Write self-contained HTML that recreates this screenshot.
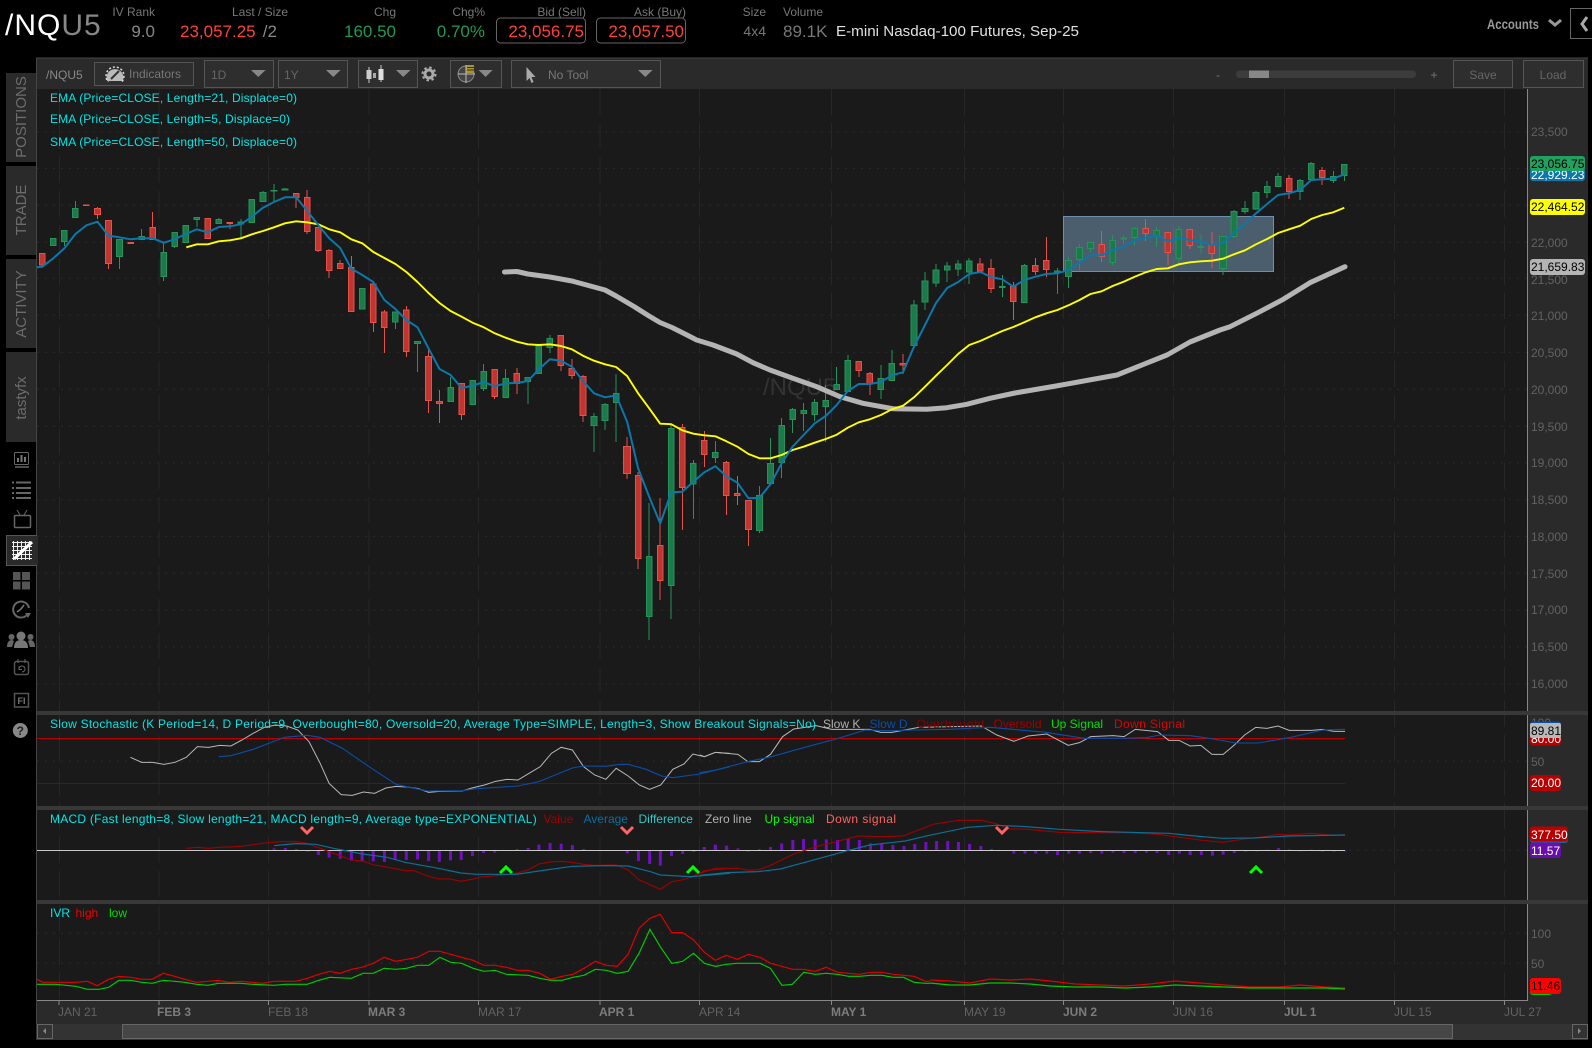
<!DOCTYPE html>
<html><head><meta charset="utf-8"><title>/NQU5</title>
<style>
html,body{margin:0;padding:0;background:#000;width:1592px;height:1048px;overflow:hidden}
svg{display:block}
text{font-family:"Liberation Sans",Arial,sans-serif;font-size:12px;white-space:pre}
.n *{vector-effect:non-scaling-stroke;fill:none}
.l{fill:none;stroke-linejoin:round}
.h{fill:#777}.o{fill:#777;font-size:12px}
.v{font-size:17px}
.a{fill:#626262}
.c{fill:#00e6e6}
.d{fill:#626262}.db{fill:#7c7c7c;font-weight:bold}
</style></head><body>
<svg width="1592" height="1048" viewBox="0 0 1592 1048" xmlns="http://www.w3.org/2000/svg">
<rect width="1592" height="1048" fill="#000"/>

<!-- header -->
<text x="5" y="35" font-size="30" style="font-size:30px;letter-spacing:1px" fill="#fff">/NQ<tspan fill="#888">U5</tspan></text>
<text x="155" y="16" text-anchor="end" class="h">IV Rank</text>
<text x="155" y="37" text-anchor="end" class="v" fill="#888">9.0</text>
<text x="288" y="16" text-anchor="end" class="h">Last / Size</text>
<text x="180" y="37" class="v" fill="#ff4136">23,057.25</text>
<text x="258" y="37" class="v" fill="#888"> /2</text>
<text x="396" y="16" text-anchor="end" class="h">Chg</text>
<text x="396" y="37" text-anchor="end" class="v" fill="#1f9a50">160.50</text>
<text x="485" y="16" text-anchor="end" class="h">Chg%</text>
<text x="485" y="37" text-anchor="end" class="v" fill="#1f9a50">0.70%</text>
<text x="586" y="16" text-anchor="end" class="h">Bid (Sell)</text>
<rect x="496.5" y="18" width="89" height="25" rx="4" fill="none" stroke="#666"/>
<text x="584" y="37" text-anchor="end" class="v" fill="#ff4136">23,056.75</text>
<text x="686" y="16" text-anchor="end" class="h">Ask (Buy)</text>
<rect x="596.5" y="18" width="89" height="25" rx="4" fill="none" stroke="#666"/>
<text x="684" y="37" text-anchor="end" class="v" fill="#ff4136">23,057.50</text>
<text x="766" y="16" text-anchor="end" class="h">Size</text>
<text x="766" y="36" text-anchor="end" style="font-size:14px" fill="#777">4x4</text>
<text x="783" y="16" class="h">Volume</text>
<text x="783" y="37" class="v" fill="#777">89.1K</text>
<text x="836" y="36" style="font-size:15px" fill="#e0e0e0" textLength="243" lengthAdjust="spacingAndGlyphs">E-mini Nasdaq-100 Futures, Sep-25</text>
<text x="1487" y="29" style="font-size:14px;font-weight:bold" fill="#999" textLength="52" lengthAdjust="spacingAndGlyphs">Accounts</text>
<path d="M1549 20l6 5 6-5" fill="none" stroke="#999" stroke-width="3"/>
<rect x="1570.5" y="8.5" width="24" height="30" fill="none" stroke="#666"/>
<path d="M1587 17l-5 7 5 7" fill="none" stroke="#aaa" stroke-width="3"/>

<!-- toolbar -->
<rect x="36" y="58" width="1552" height="31" fill="#2a2a2a"/>
<rect x="36" y="57.5" width="1552" height="1" fill="#444"/>
<text x="46" y="79" fill="#888">/NQU5</text>
<rect x="94.5" y="62.5" width="99" height="23" fill="#2e2e2e" stroke="#555"/>
<path d="M107.2 81a8.5 8.5 0 1 1 15.6 0z" fill="#bbb"/><circle cx="115" cy="76" r="9" fill="none" stroke="#ddd" stroke-width="1.5" stroke-dasharray="2 2" clip-path="inset(0 0 20% 0)"/><path d="M111 79l8-8" stroke="#333" stroke-width="2"/>
<text x="129" y="78" fill="#777">Indicators</text>
<rect x="204.5" y="60.5" width="69" height="27" fill="#2e2e2e" stroke="#555"/>
<text x="211" y="79" fill="#666">1D</text><path d="M251 70h14.6l-7.3 7z" fill="#888"/>
<rect x="278.5" y="60.5" width="69" height="27" fill="#2e2e2e" stroke="#555"/>
<text x="284" y="79" fill="#666">1Y</text><path d="M326 70h14.6l-7.3 7z" fill="#888"/>
<rect x="358.5" y="60.5" width="59" height="27" fill="#2e2e2e" stroke="#555"/>
<path d="M369 67v16M381 65v17" stroke="#ccc"/><rect x="366.5" y="70" width="5" height="9" fill="#ccc"/><rect x="378.5" y="69" width="5" height="11" fill="#ddd"/><rect x="373" y="73" width="3" height="5" fill="#aaa"/>
<path d="M396 70h14.6l-7.3 7z" fill="#888"/>
<circle cx="429" cy="74" r="4" fill="none" stroke="#aaa" stroke-width="3"/><circle cx="429" cy="74" r="6.5" fill="none" stroke="#aaa" stroke-width="2" stroke-dasharray="2.5 2.6"/>
<rect x="450.5" y="60.5" width="51" height="27" fill="#2e2e2e" stroke="#555"/>
<circle cx="466" cy="74" r="8" fill="#444" stroke="#888"/><path d="M458 74h17M466 65v18" stroke="#bbb"/><rect x="466.5" y="65" width="7.5" height="8" fill="#a8962c"/><path d="M467 67.500h7M467 70h7" stroke="#2e2e2e"/>
<path d="M478.6 70h14l-7 7z" fill="#888"/>
<rect x="511.5" y="60.5" width="149" height="27" fill="#2e2e2e" stroke="#555"/>
<path d="M526.5 67v14l3-3 2 5 2-1-2-5h4z" fill="#aaa"/>
<text x="548" y="79" fill="#777">No Tool</text><path d="M638 70h14.6l-7.3 7z" fill="#888"/>
<text x="1218" y="79" text-anchor="middle" fill="#777">-</text>
<rect x="1236" y="70.5" width="180" height="7.5" rx="3.5" fill="#3c3c3c"/>
<rect x="1249" y="70.5" width="20" height="7.5" fill="#888"/>
<text x="1434" y="79" text-anchor="middle" fill="#777">+</text>
<rect x="1453.5" y="60.5" width="59" height="27" fill="#2e2e2e" stroke="#555"/>
<text x="1483" y="79" text-anchor="middle" fill="#666">Save</text>
<rect x="1523.5" y="60.5" width="60" height="27" fill="#2e2e2e" stroke="#555"/>
<text x="1553" y="79" text-anchor="middle" fill="#666">Load</text>

<!-- chart backgrounds -->
<rect x="37" y="89" width="1491" height="911" fill="#1a1a1a"/>
<rect x="1528" y="89" width="60" height="935" fill="#2a2a2a"/>
<rect x="36" y="1000" width="1552" height="24" fill="#2a2a2a"/>
<rect x="36" y="58" width="1" height="982" fill="#444"/>

<!-- horizontal grid -->
<path d="M37 131.7H1528M37 168.5H1528M37 205.3H1528M37 242.3H1528M37 278.3H1528M37 315.3H1528M37 352.3H1528M37 389.3H1528M37 426H1528M37 462.8H1528M37 499.6H1528M37 536.4H1528M37 573.2H1528M37 610H1528M37 646.8H1528M37 683.6H1528M37 761.3H1528M37 850.3H1528M37 933.3H1528M37 963.3H1528" stroke="#2a2a2a" stroke-dasharray="2 6" fill="none"/>
<!-- vertical grid -->
<path d="M59.5 89V1000M159 89V1000M268.5 89V1000M369 89V1000M478.5 89V1000M600 89V1000M699.5 89V1000M831.5 89V1000M964.5 89V1000M1063.5 89V1000M1173.5 89V1000M1284.5 89V1000M1394.5 89V1000M1504.5 89V1000" stroke="#272727" stroke-dasharray="26 8" fill="none"/>

<!-- indicator separators -->
<rect x="37" y="711" width="1551" height="4" fill="#383838"/>
<rect x="37" y="806" width="1551" height="4" fill="#383838"/>
<rect x="37" y="900" width="1551" height="4" fill="#383838"/>
<path d="M1527.5 89V711M1527.5 715V806M1527.5 810V900M1527.5 904V1000" stroke="#888"/>
<path d="M37 1000.5H1528" stroke="#888"/>

<!-- watermark and highlight -->
<text x="763" y="395" style="font-size:24px" fill="#333">/NQU5</text>
<rect x="1063.5" y="216.5" width="210" height="55" fill="#8cbce0" fill-opacity=".42" stroke="#6e90ac"/>

<!-- candle wicks -->
<path shape-rendering="crispEdges" fill="none" stroke="#e8504a" d="M42.3 253V265M97.5 207V219M108.5 220V269M152.6 212V239M207.8 218V239M229.9 222V229M296.1 193V208M307.1 190V234M318.2 227V252M329.2 249V278M340.2 260V269M351.3 256V312M373.3 281V332M384.4 310V353M406.4 306V357M428.5 347V413M439.5 390V423M461.6 383V420M494.7 369V399M516.8 368V394M560.9 335V371M571.9 359V379M583 375V422M627.1 437V479M638.1 472V569M660.2 498V600M682.3 424V530M704.3 431V467M726.4 461V515M737.4 476V505M748.5 500V546M858.8 361V377M869.9 372V395M903 354V374M980.2 258V272M991.2 259V293M1013.3 282V320M1035.4 258V275M1046.4 237V277M1101.6 231V262M1145.7 219V241M1167.8 232V265M1189.8 229V249M1211.9 232V268M1289.1 175V199M1322.2 167V185"/>
<path shape-rendering="crispEdges" fill="none" stroke="#27935a" d="M64.4 230V246M75.4 201V218M119.5 239V269M141.6 229V239M163.7 243V281M174.7 232V248M196.8 217V227M218.8 218V223M240.9 219V238M263 191V202M274 184V202M285 188V190M395.4 312V329M417.5 341V372M450.6 377V402M483.7 364V391M505.7 369V398M527.8 377V404M549.9 335V353M594 413V452M605 403V430M616.1 374V442M649.2 503V640M671.2 425V619M693.3 460V519M715.4 441V463M759.5 486V533M770.5 438V484M781.6 418V478M792.6 408V433M803.6 403V431M814.7 399V421M825.7 385V442M836.7 367V390M847.8 355V392M880.9 365V399M891.9 350V381M914 300V346M925 272V310M936 264V287M947.1 262V282M958.1 260V276M969.2 258V284M1002.3 275V297M1024.3 264V303M1057.4 268V294M1068.5 257V288M1079.5 244V270M1090.5 242V252M1112.6 235V265M1123.6 235V244M1134.7 227V246M1156.7 227V247M1178.8 226V265M1200.9 235V253M1222.9 236V275M1234 210V238M1245 201V214M1256 191V210M1267.1 181V198M1278.1 173V187M1300.2 179V200M1311.2 162V180M1333.3 171V183M1344.3 164V181"/>

<!-- red bodies -->
<path shape-rendering="crispEdges" fill="#bf352f" stroke="#e8504a" d="M42.3 253.3m-2.8 0h5.6V265h-5.6zM86.4 205m-2.8 0h5.6V205.7h-5.6zM97.5 208.3m-2.8 0h5.6V214.7h-5.6zM108.5 220.3m-2.8 0h5.6V263.7h-5.6zM130.6 242.3m-2.8 0h5.6V243.7h-5.6zM152.6 227.3m-2.8 0h5.6V239.3h-5.6zM207.8 218.3m-2.8 0h5.6V238.7h-5.6zM229.9 222.3m-2.8 0h5.6V223.7h-5.6zM296.1 193.3m-2.8 0h5.6V197.7h-5.6zM307.1 197.3m-2.8 0h5.6V231.7h-5.6zM318.2 227.3m-2.8 0h5.6V250.7h-5.6zM329.2 250.3m-2.8 0h5.6V270.7h-5.6zM340.2 263.3m-2.8 0h5.6V268.7h-5.6zM351.3 267.3m-2.8 0h5.6V311.7h-5.6zM373.3 284m-2.8 0h5.6V322.3h-5.6zM384.4 312m-2.8 0h5.6V327.3h-5.6zM406.4 310m-2.8 0h5.6V351.7h-5.6zM428.5 356.3m-2.8 0h5.6V400.7h-5.6zM439.5 401.3m-2.8 0h5.6V403.7h-5.6zM461.6 383.7m-2.8 0h5.6V414.7h-5.6zM494.7 369.3m-2.8 0h5.6V396.7h-5.6zM516.8 373.3m-2.8 0h5.6V383.3h-5.6zM560.9 335.3m-2.8 0h5.6V365.3h-5.6zM571.9 368.3m-2.8 0h5.6V375.3h-5.6zM583 376.3m-2.8 0h5.6V415.7h-5.6zM627.1 446.3m-3.5 0h7V473.7h-7zM638.1 475.3m-2.8 0h5.6V558.7h-5.6zM660.2 545.3m-2.8 0h5.6V580.7h-5.6zM682.3 427.3m-2.8 0h5.6V487.7h-5.6zM704.3 440.3m-2.8 0h5.6V454.7h-5.6zM726.4 462.3m-2.8 0h5.6V495.3h-5.6zM737.4 493.3m-2.8 0h5.6V495.3h-5.6zM748.5 500.3m-2.8 0h5.6V529.7h-5.6zM858.8 361.3m-2.8 0h5.6V370.3h-5.6zM869.9 373.3m-2.8 0h5.6V384h-5.6zM903 363.3m-2.8 0h5.6V365h-5.6zM980.2 264m-2.8 0h5.6V271h-5.6zM991.2 268.3m-2.8 0h5.6V288.3h-5.6zM1013.3 286.3m-2.8 0h5.6V301.3h-5.6zM1035.4 265.7m-2.8 0h5.6V271.7h-5.6zM1046.4 260.3m-2.8 0h5.6V269.3h-5.6zM1101.6 244.3m-2.8 0h5.6V256.7h-5.6zM1145.7 228.3m-2.8 0h5.6V233.7h-5.6zM1167.8 232.3m-2.8 0h5.6V252.3h-5.6zM1189.8 229.3m-2.8 0h5.6V245.7h-5.6zM1211.9 245m-2.8 0h5.6V253.3h-5.6zM1289.1 178.3m-2.8 0h5.6V191.3h-5.6zM1322.2 170.3m-2.8 0h5.6V177.3h-5.6z"/>

<!-- green bodies -->
<path shape-rendering="crispEdges" fill="#1c7a4a" stroke="#27935a" d="M53.3 238.3m-2.8 0h5.6V245.7h-5.6zM64.4 230.3m-2.8 0h5.6V241.7h-5.6zM75.4 208.3m-2.8 0h5.6V217.7h-5.6zM119.5 239.3m-2.8 0h5.6V256.7h-5.6zM141.6 236.3m-2.8 0h5.6V239.3h-5.6zM163.7 252.3m-2.8 0h5.6V276.7h-5.6zM174.7 232.3m-2.8 0h5.6V246.7h-5.6zM185.7 225.3m-2.8 0h5.6V242.7h-5.6zM196.8 217.3m-2.8 0h5.6V219.7h-5.6zM218.8 219.3m-2.8 0h5.6V223.3h-5.6zM240.9 222m-2.8 0h5.6V224h-5.6zM251.9 199.3m-2.8 0h5.6V222.7h-5.6zM263 192.3m-2.8 0h5.6V201.7h-5.6zM274 190.3m-2.8 0h5.6V191h-5.6zM285 189m-2.8 0h5.6V190h-5.6zM362.3 288.3m-2.8 0h5.6V309h-5.6zM395.4 312m-2.8 0h5.6V322h-5.6zM417.5 341.3m-2.8 0h5.6V343.7h-5.6zM450.6 387.3m-2.8 0h5.6V401.7h-5.6zM472.6 380.3m-2.8 0h5.6V404.7h-5.6zM483.7 371.3m-2.8 0h5.6V388.7h-5.6zM505.7 378.3m-2.8 0h5.6V397.7h-5.6zM527.8 377.3m-2.8 0h5.6V381.7h-5.6zM538.8 346m-2.8 0h5.6V373.3h-5.6zM549.9 338.3m-2.8 0h5.6V347.7h-5.6zM594 416.3m-2.8 0h5.6V425.3h-5.6zM605 404.3m-2.8 0h5.6V420.7h-5.6zM616.1 393.3m-2.8 0h5.6V402.7h-5.6zM649.2 556.3m-2.8 0h5.6V616.3h-5.6zM671.2 428.3m-2.8 0h5.6V585.7h-5.6zM693.3 463.3m-2.8 0h5.6V484h-5.6zM715.4 452.3m-2.8 0h5.6V457.7h-5.6zM759.5 495.3m-2.8 0h5.6V530.7h-5.6zM770.5 463.3m-2.8 0h5.6V483.7h-5.6zM781.6 425.3m-2.8 0h5.6V462.7h-5.6zM792.6 409.3m-2.8 0h5.6V419.7h-5.6zM803.6 410.3m-2.8 0h5.6V413.3h-5.6zM814.7 402.3m-2.8 0h5.6V414.7h-5.6zM825.7 400.3m-2.8 0h5.6V406.7h-5.6zM836.7 384.3m-2.8 0h5.6V389.7h-5.6zM847.8 360.3m-2.8 0h5.6V391.7h-5.6zM880.9 378.3m-2.8 0h5.6V389.7h-5.6zM891.9 363.3m-2.8 0h5.6V380.7h-5.6zM914 305m-2.8 0h5.6V345.7h-5.6zM925 281m-2.8 0h5.6V302h-5.6zM936 270m-2.8 0h5.6V283h-5.6zM947.1 266m-2.8 0h5.6V270h-5.6zM958.1 264m-2.8 0h5.6V269h-5.6zM969.2 261m-2.8 0h5.6V272h-5.6zM1002.3 286.3m-2.8 0h5.6V287.7h-5.6zM1024.3 265.3m-2.8 0h5.6V302.7h-5.6zM1057.4 271m-2.8 0h5.6V272.3h-5.6zM1068.5 260.3m-2.8 0h5.6V276.7h-5.6zM1079.5 247.7m-2.8 0h5.6V259.3h-5.6zM1090.5 242.3m-2.8 0h5.6V248.7h-5.6zM1112.6 240.3m-2.8 0h5.6V262.7h-5.6zM1123.6 238m-2.8 0h5.6V239h-5.6zM1134.7 228.3m-2.8 0h5.6V237.7h-5.6zM1156.7 230.3m-2.8 0h5.6V236h-5.6zM1178.8 229.3m-2.8 0h5.6V258.3h-5.6zM1200.9 246.3m-2.8 0h5.6V247.3h-5.6zM1222.9 236.3m-3.5 0h7V268.7h-7zM1234 211.3m-2.8 0h5.6V236.7h-5.6zM1245 208.3m-2.8 0h5.6V211.7h-5.6zM1256 192.3m-2.8 0h5.6V209h-5.6zM1267.1 186.3m-2.8 0h5.6V192.7h-5.6zM1278.1 176.3m-2.8 0h5.6V186.7h-5.6zM1300.2 180.3m-2.8 0h5.6V191.3h-5.6zM1311.2 163.3m-2.8 0h5.6V179.3h-5.6zM1333.3 176.3m-2.8 0h5.6V180.7h-5.6zM1344.3 164.3m-2.8 0h5.6V175.3h-5.6z"/>

<!-- SMA 50 -->
<polyline class="l" stroke="#b4b4b4" stroke-width="5" stroke-linecap="round" points="504.5,272 516.8,271.5 527.8,274 538.8,275.5 549.9,277 560.9,279 571.9,281 583,284 594,287 605,290 616.1,296 634,306.5 649,316 660,322.500 672,327.500 685,334 696.7,340 713,345 736.7,354 753,362.7 770,370 793,378.3 816.7,386.7 840,396.7 863,403.3 893,408.7 926.7,409.3 946.7,407.7 966.7,404.3 990,398.3 1015,393 1056,386 1117,375 1167,355 1190,342 1220,330 1230,326.7 1256.7,313.3 1283.3,299.3 1310,282.7 1345,266.7"/>
<!-- EMA 21 -->
<polyline class="l" stroke="#ffff00" stroke-width="1.9" points="186.3,247.3 196.8,244.3 207.8,244.3 218.8,241.3 229.9,240.3 240.9,238.3 251.9,234.3 263,231 274,227.3 285,223.3 296.1,221.3 307.1,222.3 318.2,224.3 329.2,229.3 340.2,232.3 351.3,239.3 362.3,243.3 373.3,252 384.4,258 395.4,264 406.4,272 417.5,282 428.5,293 439.5,303 450.6,311 461.6,316.7 472.6,322.7 483.7,327.3 494.7,333.3 505.7,337.7 516.8,341.7 527.8,344.3 538.8,345 549.9,344.3 560.9,346 571.9,349.3 583,355.7 594,360.7 605,364.3 616.1,367 627.1,376 638.1,393.3 649.2,408.3 660.2,423.7 671.2,424.2 682.3,430.3 693.3,433.7 704.3,435.3 715.4,436.3 726.4,441.3 737.4,446.7 748.5,454 759.5,458.3 770.5,458.3 781.6,455 792.6,450 803.6,446.7 814.7,442.7 825.7,439 836.7,434.7 847.8,427.7 858.8,422.3 869.9,419.3 880.9,415 891.9,409.3 903,405.7 914,397.3 925,386.7 936,375.7 947.1,365 958.1,354 969.2,345 980.2,341 991.2,336 1002.3,331 1013.3,327 1024.3,322.3 1035.4,317.3 1046.4,313.3 1057.4,310 1068.5,305.3 1079.5,300 1090.5,294 1101.6,291.3 1112.6,286 1123.6,281.7 1134.7,276.7 1145.7,272.3 1156.7,269 1167.8,268.3 1178.8,264.3 1189.8,262.3 1200.9,261.3 1211.9,260.7 1222.9,258.7 1234,254.3 1245,250.3 1256,244.3 1267.1,239 1278.1,233 1289.1,229.3 1300.2,225.7 1311.2,219 1322.2,215 1333.3,212.3 1344.3,207.7"/>
<!-- EMA 5 -->
<polyline class="l" stroke="#0a78aa" stroke-width="2" points="36.7,267.3 42.3,266.7 53.3,258.3 64.4,248.3 75.4,234 86.4,225.3 97.5,221.7 108.5,235.7 119.5,237.3 130.6,239.3 141.6,238.3 152.6,238.3 163.7,242.7 174.7,239.3 185.7,234 196.8,229.3 207.8,232.3 218.8,227 229.9,226.3 240.9,224.3 251.9,216.7 263,207.7 274,202 285,197.3 296.1,197.3 307.1,210.7 318.2,225 329.2,238.3 340.2,248 351.3,268.7 362.3,275 373.3,282 384.4,300 395.4,309 406.4,320 417.5,327.3 428.5,348.3 439.5,369 450.6,375 461.6,388 472.6,385.7 483.7,382 494.7,386.3 505.7,383.3 516.8,383 527.8,381 538.8,369.3 549.9,359.3 560.9,360.7 571.9,366.7 583,381 594,393.3 605,397.3 616.1,395.3 627.1,421.7 638.1,468.3 649.2,496.7 660.2,523.5 671.2,492.3 682.3,491.7 693.3,481.7 704.3,472.3 715.4,466.3 726.4,476.3 737.4,482.7 748.5,498.3 759.5,497.7 770.5,484.3 781.6,463.3 792.6,446.7 803.6,435 814.7,423.3 825.7,416 836.7,405 847.8,391 858.8,384 869.9,384 880.9,382 891.9,375.3 903,372.3 914,346.7 925,325 936,303 947.1,288 958.1,282 969.2,274 980.2,272 991.2,277 1002.3,279.3 1013.3,286.7 1024.3,280 1035.4,276.7 1046.4,274 1057.4,273.3 1068.5,270 1079.5,262.7 1090.5,255.3 1101.6,255.3 1112.6,250 1123.6,246.7 1134.7,240 1145.7,238 1156.7,235.3 1167.8,241.3 1178.8,237.7 1189.8,240 1200.9,241.7 1211.9,245.3 1222.9,242.7 1234,232.7 1245,224 1256,213.3 1267.1,204 1278.1,195 1289.1,193.3 1300.2,190 1311.2,180 1322.2,179.3 1333.3,178.7 1344.3,174.3"/>

<text x="50" y="102" class="c" textLength="247">EMA (Price=CLOSE, Length=21, Displace=0)</text>
<text x="50" y="123" class="c" textLength="240">EMA (Price=CLOSE, Length=5, Displace=0)</text>
<text x="50" y="146" class="c" textLength="247">SMA (Price=CLOSE, Length=50, Displace=0)</text>

<!-- Stochastic -->
<path d="M37 738.5H1345" stroke="#b80000" fill="none"/>
<path d="M37 783.5H1345" stroke="#8a0000" fill="none"/>
<g class="n" transform="translate(30,700) scale(.4464,.3333)">
<polyline stroke="#b8b8b8" stroke-width="1" points="225,172 250,187 275,187 300,193 325,187 350,172 375,140 400,142 425,136 450,138 475,120 500,100 525,82 550,75 575,78 600,90 625,125 650,190 670,250 697,284 722,286 747,276 772,280 797,264 820,259 845,261 870,266 893,277 918,274 968,273 990,264 1018,255 1043,244 1068,238 1093,240 1118,220 1143,200 1168,160 1190,142 1215,150 1240,200 1265,225 1290,238 1313,205 1340,228 1365,255 1388,268 1413,255 1440,208 1465,192 1485,162 1510,170 1535,157 1568,160"/>
<polyline stroke="#0a4ea8" stroke-width="1.1" points="423,170 450,167 500,148 545,125 570,112 620,106 650,112 700,145 765,205 820,253 850,262 890,273 968,272 1000,266 1093,258 1140,245 1215,204 1240,198 1290,199 1320,193 1340,193 1380,208 1415,228 1440,233 1500,222 1568,200"/>
</g>
<g class="n" transform="translate(700,700) scale(.4464,.3333)">
<polyline stroke="#b8b8b8" stroke-width="1" points="0,165 10,170 35,157 85,163 107,185 133,185 158,163 185,110 210,87 235,82 260,77 295,88 380,88 405,97 430,97 490,82 630,78 665,105 703,124 735,108 777,102 825,136 850,128 875,110 925,107 950,110 975,88 1025,95 1050,121 1073,121 1098,138 1122,136 1147,163 1172,163 1197,135 1220,105 1245,82 1270,85 1295,78 1320,91 1370,91 1395,88 1420,94 1445,94"/>
<polyline stroke="#0a4ea8" stroke-width="1.1" points="0,218 35,210 110,184 160,170 240,140 305,117 370,90 430,92 480,90 560,88 650,82 700,88 775,97 860,115 950,115 1000,113 1030,105 1100,107 1150,117 1200,129 1250,129 1320,113 1395,90 1445,88"/>
</g>
<text x="50" y="728" class="c" textLength="766">Slow Stochastic (K Period=14, D Period=9, Overbought=80, Oversold=20, Average Type=SIMPLE, Length=3, Show Breakout Signals=No)</text>
<text x="823" y="728" fill="#b0b0b0">Slow K</text>
<text x="869.5" y="728" fill="#0a4ea8">Slow D</text>
<text x="916.5" y="728" fill="#8a0000" textLength="68">Overbought</text>
<text x="993.5" y="728" fill="#a00000">Oversold</text>
<text x="1051" y="728" fill="#00e000">Up Signal</text>
<text x="1114" y="728" fill="#e00000" textLength="71">Down Signal</text>

<!-- MACD -->
<g class="n" transform="translate(30,700) scale(.4464,.3333)">
<path stroke="#7010c0" stroke-width="3" d="M547 445V451M572 444V451M597 447V451M622 451V455M646 451V465M670 451V473M695 451V476M720 451V482M744 451V485M769 451V484M794 451V486M818 451V480M843 451V480M868 451V478M893 451V483M917 451V486M942 451V481M966 451V480M991 451V468M1016 451V459M1041 451V458M1066 450V452M1091 447V451M1116 444V451M1140 434V451M1165 429V451M1190 431V451M1215 435V451M1240 447V451M1265 450V452M1290 451V452M1313 450V452M1338 451V460M1363 451V483M1388 451V492M1412 451V497M1437 451V468M1462 451V462M1487 451V456M1510 441V451M1535 434V451M1560 437V451"/>
</g>
<g class="n" transform="translate(700,700) scale(.4464,.3333)">
<path stroke="#7010c0" stroke-width="3" d="M10 441V451M35 435V451M60 441V451M85 445V451M108 451V455M133 447V451M158 441V451M183 430V451M208 420V451M232 417V451M258 418V451M283 418V451M308 420V451M332 417V451M357 420V451M382 430V451M407 431V451M432 435V451M457 438V451M481 432V451M506 426V451M530 423V451M555 423V451M579 426V451M604 432V451M629 438V451M653 447V451M678 451V453M703 451V461M728 451V461M752 451V461M777 451V461M801 451V465M826 451V461M850 451V461M875 451V459M900 451V461M925 451V458M950 451V459M975 451V459M1000 451V458M1024 451V459M1050 451V465M1074 451V461M1098 451V465M1123 451V465M1148 451V467M1172 451V464M1197 451V459M1222 451V455M1247 451V454M1270 449V451M1296 444V451M1320 448V451M1345 451V454M1370 449V451M1395 451V455M1420 451V455M1445 451V454"/>
</g>
<path d="M37 850.5H1345" stroke="#c8c8c8" fill="none"/>
<g class="n" transform="translate(30,700) scale(.4464,.3333)">
<polyline stroke="#a00000" stroke-width="1.1" points="350,445 375,442 400,445 425,442 450,441 480,438 520,430 560,425 595,425 620,430 650,445 680,460 720,480 745,483 770,495 795,500 840,512 860,512 890,528 915,537 940,537 965,544 990,538 1015,530 1040,528 1090,520 1115,510 1140,492 1165,486 1190,484 1215,487 1240,493 1265,496 1313,495 1340,510 1365,540 1412,568 1438,545 1460,540 1485,530 1510,512 1568,505"/>
<polyline stroke="#0a7096" stroke-width="1.2" points="547,437 595,431 640,433 680,445 745,462 800,472 840,487 915,505 965,519 1000,523 1090,523 1140,513 1215,499 1290,497 1340,498 1390,515 1412,525 1480,530 1568,520"/>
</g>
<g class="n" transform="translate(700,700) scale(.4464,.3333)">
<polyline stroke="#a00000" stroke-width="1.1" points="0,520 35,505 85,505 110,511 135,508 160,495 210,462 260,440 305,425 355,408 405,410 455,408 480,395 525,372 580,361 630,361 660,370 695,387 725,387 805,397 900,398 960,398 1025,403 1065,410 1120,420 1170,427 1220,417 1270,409 1295,403 1320,405 1370,400 1420,406 1445,404"/>
<polyline stroke="#0a7096" stroke-width="1.2" points="0,526 60,518 130,515 180,507 260,478 330,452 380,435 460,423 510,407 600,382 665,376 730,380 805,388 900,395 1050,400 1100,407 1170,415 1240,414 1320,408 1445,405"/>
</g>
<path d="M301 827l6 6 6-6M621 827l6 6 6-6M996 827l6 6 6-6" fill="none" stroke="#ff6464" stroke-width="3"/>
<path d="M500 873l6-6 6 6M687 873l6-6 6 6M1250 873l6-6 6 6" fill="none" stroke="#00ff00" stroke-width="3"/>
<text x="50" y="823" class="c" textLength="486.700">MACD (Fast length=8, Slow length=21, MACD length=9, Average type=EXPONENTIAL)</text>
<text x="543.5" y="823" fill="#a00000">Value</text>
<text x="583.5" y="823" fill="#0a6ea0">Average</text>
<text x="638.5" y="823" fill="#33c8c8">Difference</text>
<text x="705" y="823" fill="#b0b0b0">Zero line</text>
<text x="764.5" y="823" fill="#00ff00">Up signal</text>
<text x="826" y="823" fill="#ff6464" textLength="70">Down signal</text>

<!-- IVR -->
<g class="n" transform="translate(30,890) scale(.574,.3333)">
<polyline stroke="#e00000" stroke-width="1.2" points="12,268 22,277 80,277 100,274 117,287 137,268 155,259 175,262 195,268 213,268 232,250 252,259 270,268 290,277 310,274 328,271 347,277 367,274 387,277 405,280 425,274 463,274 483,265 503,253 522,244 540,250 560,238 578,232 598,220 617,202 637,214 656,208 675,202 695,184 714,184 733,193 752,202 772,211 791,226 810,226 830,232 849,241 868,241 888,250 907,268 927,259 946,253 965,235 985,214 1004,226 1023,229 1042,193 1061,115 1080,85 1098,73 1118,128 1137,128 1156,150 1175,187 1194,211 1213,196 1232,208 1252,193 1272,202 1290,220 1310,229 1328,238 1348,238 1368,244 1387,232 1407,247 1426,250 1445,253 1465,247 1484,247 1504,253 1522,256 1540,259 1560,274 1568,274"/>
<polyline stroke="#00c800" stroke-width="1.2" points="12,283 45,283 80,289 100,298 120,298 137,292 155,271 175,271 195,277 213,280 232,271 252,274 270,277 290,283 310,286 328,280 367,280 387,283 425,286 445,283 483,283 503,271 522,262 560,265 580,250 598,250 617,235 637,238 656,235 675,226 695,226 714,202 733,217 752,220 772,235 791,244 810,241 830,253 868,256 888,265 907,271 927,271 946,262 965,256 985,238 1004,241 1023,250 1042,244 1061,190 1080,118 1098,170 1118,220 1137,214 1156,190 1175,220 1194,229 1213,223 1232,220 1272,220 1290,235 1310,286 1328,283 1348,247 1368,253 1387,250 1407,253 1426,259 1445,259 1465,256 1484,256 1504,262 1522,262 1540,277 1560,280 1568,280"/>
</g>
<polyline class="l" stroke="#e00000" stroke-width="1.2" points="930,980 950,981 970,983 990,979 1010,980 1030,979 1050,981 1075,984 1100,985 1125,986 1150,984 1175,981 1200,983 1225,985 1250,987 1280,987 1300,985 1325,987 1345,988"/>
<polyline class="l" stroke="#00c800" stroke-width="1.2" points="930,983 950,985 970,985 990,983 1010,983 1030,984 1050,986 1075,987 1100,987 1125,988 1150,987 1175,985 1200,986 1225,987 1250,988 1280,988 1300,988 1325,988 1345,989"/>
<text x="50" y="917" class="c">IVR</text>
<text x="75.5" y="917" fill="#f00000">high</text>
<text x="109" y="917" fill="#00e000">low</text>

<!-- right axis -->
<g class="a">
<text x="1531" y="136">23,500</text>
<text x="1531" y="247">22,000</text>
<text x="1531" y="284">21,500</text>
<text x="1531" y="320">21,000</text>
<text x="1531" y="357">20,500</text>
<text x="1531" y="394">20,000</text>
<text x="1531" y="431">19,500</text>
<text x="1531" y="467">19,000</text>
<text x="1531" y="504">18,500</text>
<text x="1531" y="541">18,000</text>
<text x="1531" y="578">17,500</text>
<text x="1531" y="614">17,000</text>
<text x="1531" y="651">16,500</text>
<text x="1531" y="688">16,000</text>
<text x="1531" y="727">100</text>
<text x="1531" y="766">50</text>
<text x="1531" y="938">100</text>
<text x="1531" y="968">50</text>
</g>
<rect x="1530" y="168" width="55" height="13" rx="3" fill="#0a78aa"/>
<text x="1531" y="179" fill="#fff">22,929.23</text>
<rect x="1530" y="156" width="55" height="15" rx="3" fill="#22a060"/>
<text x="1531" y="168" fill="#000">23,056.75</text>
<rect x="1530" y="199" width="55" height="16" rx="3" fill="#ffff00"/>
<text x="1531" y="211" fill="#000">22,464.52</text>
<rect x="1530" y="259" width="55" height="16" rx="3" fill="#b4b4b4"/>
<text x="1531" y="271" fill="#000">21,659.83</text>
<rect x="1530" y="721.5" width="31" height="6" rx="3" fill="#0a4ea8"/>
<rect x="1530" y="734" width="31" height="11.5" rx="3" fill="#b80000"/>
<text x="1531" y="743" fill="#fff">80.00</text>
<rect x="1530" y="723" width="31" height="15" rx="2" fill="#b8b8b8"/>
<text x="1531" y="735" fill="#000">89.81</text>
<rect x="1530" y="775" width="31" height="16" rx="3" fill="#b80000"/>
<text x="1531" y="787" fill="#fff">20.00</text>
<rect x="1530" y="829" width="38" height="14" rx="3" fill="#0a7096"/>
<rect x="1530" y="826.5" width="38" height="15" rx="3" fill="#b80000"/>
<text x="1531" y="839" fill="#fff">377.50</text>
<rect x="1530" y="842.5" width="31" height="15.5" rx="3" fill="#6a0dad"/>
<text x="1531" y="855" fill="#fff">11.57</text>
<rect x="1530" y="985" width="22" height="10" rx="3" fill="#00c800"/>
<rect x="1530" y="978" width="31" height="16" rx="3" fill="#ff0000"/>
<text x="1531" y="990" fill="#000">11.46</text>

<!-- bottom axis -->
<path d="M59 1000v5M159 1000v5M268.5 1000v5M369 1000v5M478.5 1000v5M600 1000v5M699.5 1000v5M831.5 1000v5M964.5 1000v5M1063.5 1000v5M1173.5 1000v5M1284.5 1000v5M1394.5 1000v5M1504.5 1000v5" stroke="#888" fill="none"/>
<text x="58" y="1016" class="d">JAN 21</text>
<text x="157" y="1016" class="db">FEB 3</text>
<text x="268" y="1016" class="d">FEB 18</text>
<text x="368" y="1016" class="db">MAR 3</text>
<text x="478" y="1016" class="d">MAR 17</text>
<text x="599" y="1016" class="db">APR 1</text>
<text x="699" y="1016" class="d">APR 14</text>
<text x="831" y="1016" class="db">MAY 1</text>
<text x="964" y="1016" class="d">MAY 19</text>
<text x="1063" y="1016" class="db">JUN 2</text>
<text x="1173" y="1016" class="d">JUN 16</text>
<text x="1284" y="1016" class="db">JUL 1</text>
<text x="1394" y="1016" class="d">JUL 15</text>
<text x="1504" y="1016" class="d">JUL 27</text>

<!-- scrollbar -->
<rect x="36" y="1024" width="1552" height="16" fill="#333"/>
<rect x="37.5" y="1024.5" width="15" height="14" fill="#333" stroke="#666"/>
<path d="M46 1028v6l-3-3z" fill="#888"/>
<rect x="122.5" y="1024.5" width="1330" height="14" fill="#464646" stroke="#666"/>
<rect x="1572.5" y="1024.5" width="15" height="14" fill="#333" stroke="#666"/>
<path d="M1578 1028v6l3-3z" fill="#888"/>

<!-- side tabs -->
<rect x="6" y="73" width="30" height="89" fill="#2a2a2a"/>
<rect x="6" y="166" width="30" height="89" fill="#2a2a2a"/>
<rect x="6" y="259" width="30" height="89" fill="#2a2a2a"/>
<rect x="6" y="352" width="30" height="90" fill="#2a2a2a"/>
<text transform="translate(26,117) rotate(-90)" text-anchor="middle" style="font-size:15px" fill="#6c6c6c">POSITIONS</text>
<text transform="translate(26,210) rotate(-90)" text-anchor="middle" style="font-size:15px" fill="#6c6c6c">TRADE</text>
<text transform="translate(26,304) rotate(-90)" text-anchor="middle" style="font-size:15px" fill="#6c6c6c">ACTIVITY</text>
<text transform="translate(26,398) rotate(-90)" text-anchor="middle" style="font-size:15px" fill="#6c6c6c">tastyfx</text>

<!-- rail icons -->
<rect x="14.5" y="452.5" width="14" height="12" rx="1" fill="none" stroke="#666"/>
<path d="M15 467h14" stroke="#666" stroke-width="1.5"/>
<path d="M18 462v-4M21.5 462v-7M25 462v-5" stroke="#777" stroke-width="2"/>
<path d="M12 482.5h2M16 482.5h15M12 488h2M16 488h15M12 493h2M16 493h15M12 498h2M16 498h15" stroke="#666" stroke-width="2"/>
<rect x="14.5" y="515.5" width="16" height="12" rx="1" fill="none" stroke="#666" stroke-width="1.5"/>
<path d="M20 515l-3-5M24 515l3-5" stroke="#666"/>
<rect x="6.5" y="535.5" width="30" height="30" fill="#2a2a2a" stroke="#555"/>
<rect x="36" y="536" width="2" height="29" fill="#2a2a2a"/>
<path d="M12 542.5H32M12 546.5H32M12 550.5H32M12 554.5H32M12 558.5H32M13.5 541V560M17.5 541V560M21.5 541V560M25.5 541V560M29.5 541V560" stroke="#eee" fill="none"/>
<path d="M14 559l18-17" stroke="#fff" stroke-width="3"/>
<path d="M13 572h7.5v8H13zM22 572h8v8h-8zM13 581.5h7.5v8H13zM22 581.5h8v8h-8z" fill="#555"/>
<path d="M27 615a8 8 0 1 1 2-7" fill="none" stroke="#666" stroke-width="2"/>
<path d="M21 609l-4 3M21 609l3-4" stroke="#777" stroke-width="1.5"/>
<path d="M25 613h6l-3 5z" fill="#666"/>
<circle cx="21" cy="636" r="4.5" fill="#777"/>
<path d="M14 648c0-6 3-8 7-8s7 2 7 8z" fill="#777"/>
<circle cx="11.5" cy="637" r="3" fill="#666"/><path d="M7 647c0-5 2-7 5-7l2 1-2 6z" fill="#666"/>
<circle cx="30.5" cy="637" r="3" fill="#666"/><path d="M35 647c0-5-2-7-5-7l-2 1 2 6z" fill="#666"/>
<rect x="14.5" y="661.5" width="14" height="13" rx="2" fill="none" stroke="#555" stroke-width="1.5"/>
<path d="M18 659v4M25 659v4" stroke="#666"/>
<path d="M19 669a3 3 0 1 1 3 3M19 666.5v3h3" fill="none" stroke="#666"/>
<rect x="14.5" y="693.5" width="14" height="13.5" fill="none" stroke="#555" stroke-width="1.5"/>
<text x="21.5" y="704" text-anchor="middle" style="font-size:9px;font-weight:bold" fill="#777">FI</text>
<circle cx="20.3" cy="730.5" r="7.5" fill="#888"/>
<text x="20.3" y="735" text-anchor="middle" style="font-size:12px;font-weight:bold" fill="#222">?</text>
</svg>
</body></html>
